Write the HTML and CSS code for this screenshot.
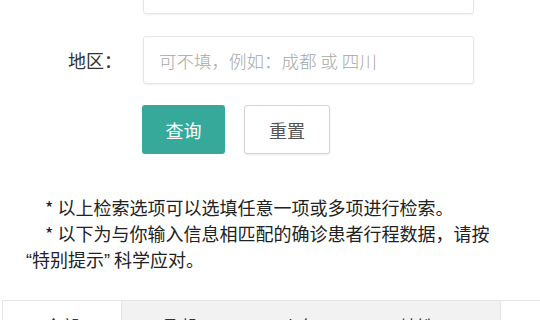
FILE: index.html
```html
<!DOCTYPE html>
<html lang="zh-CN">
<head>
<meta charset="utf-8">
<link rel="stylesheet" href="styles.css">
</head>
<body>
<div class="page">
  <div class="row row-first">
    <label class="label">姓名：</label>
    <div class="input"><span class="ph">可不填，例如：张三</span></div>
  </div>
  <div class="row">
    <label class="label">地区：</label>
    <div class="input"><span class="ph">可不填，例如：成都 或 四川</span></div>
  </div>
  <div class="actions">
    <button class="btn btn-primary">查询</button>
    <button class="btn btn-default">重置</button>
  </div>
  <div class="notes">
    <p class="note">* 以上检索选项可以选填任意一项或多项进行检索。</p>
    <p class="note">* 以下为与你输入信息相匹配的确诊患者行程数据，请按<span class="q">“</span>特别提示<span class="q">”</span> 科学应对。</p>
  </div>
  <div class="tabs">
    <div class="tab-list">
      <div class="tab active">全部</div>
      <div class="tab">飞机</div>
      <div class="tab">火车</div>
      <div class="tab">地铁</div>
    </div>
    <div class="tab-more"></div>
  </div>
</div>
</body>
</html>
```
FILE: styles.css
```css
html, body {
  margin: 0;
  padding: 0;
  background: #fff;
}
body {
  font-family: "Noto Sans CJK SC", "Noto Sans", sans-serif;
  color: #333;
  width: 540px;
  height: 320px;
  overflow: hidden;
}
.page {
  display: flex;
  flex-direction: column;
}
.row {
  display: flex;
  align-items: center;
  padding-left: 68px;
  height: 48px;
}
.row-first {
  margin-top: -34px;
  margin-bottom: 22px;
}
.label {
  width: 75px;
  font-size: 18px;
  color: #333;
}
.input {
  width: 314px;
  height: 46px;
  border: 1px solid #e6e6e6;
  border-radius: 3px;
  box-shadow: 0 1px 2px rgba(0,0,0,0.06);
  display: flex;
  align-items: center;
  padding-left: 15px;
  box-sizing: content-box;
}
.ph {
  font-size: 17.5px;
  font-weight: 300;
  color: #a8a8a8;
}
.actions {
  display: flex;
  gap: 19px;
  margin-top: 21px;
  padding-left: 142px;
}
.btn {
  font-family: inherit;
  font-size: 18px;
  height: 49px;
  border-radius: 3px;
  cursor: pointer;
}
.btn-primary {
  width: 83px;
  background: #37a99a;
  color: #fff;
  border: none;
}
.btn-default {
  width: 86px;
  background: #fff;
  color: #555;
  border: 1px solid #d4d4d4;
  box-shadow: 0 1px 2px rgba(0,0,0,0.08);
}
.notes {
  margin-top: 40px;
  padding: 0 38px 0 26px;
}
.note {
  margin: 0;
  font-size: 18px;
  line-height: 26px;
  text-indent: 19px;
  color: #222;
}
.q {
  font-family: "Liberation Sans", sans-serif;
}
.tabs {
  margin-top: 26px;
  display: flex;
  height: 40px;
  border-top: 1px solid #e6e6e6;
  margin-left: 2px;
}
.tab-list {
  display: flex;
  width: 497px;
  background: #f2f2f2;
  border-left: 1px solid #e6e6e6;
  border-right: 1px solid #e6e6e6;
}
.tab {
  width: 118px;
  text-align: center;
  font-size: 17px;
  padding-top: 12px;
  color: #333;
}
.tab.active {
  background: #fff;
  border-right: 1px solid #e6e6e6;
}
.tab-more {
  flex: 1;
  background: #fff;
}
```
